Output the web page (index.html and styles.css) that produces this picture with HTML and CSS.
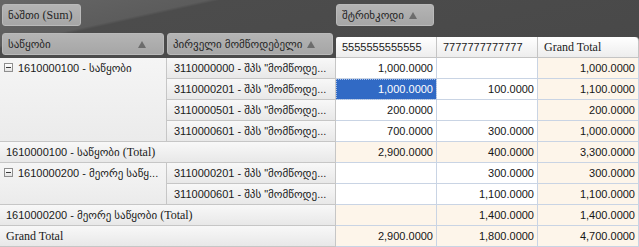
FILE: index.html
```html
<!DOCTYPE html>
<html>
<head>
<meta charset="utf-8">
<link rel="stylesheet" href="styles.css">
</head>
<body>
<div class="pivot">
  <div class="top-bg"></div>
  <div class="field filter-field">ნაშთი&nbsp;<span class="lat">(Sum)</span></div>
  <div class="field col-field"><span>შტრიხკოდი</span><span class="tri"></span></div>
  <div class="field row-field f1"><span>საწყობი</span><span class="tri"></span></div>
  <div class="field row-field f2"><span>პირველი მომწოდებელი</span><span class="tri"></span></div>
  <div class="colhdr c1">5555555555555</div>
  <div class="colhdr c2">7777777777777</div>
  <div class="colhdr c3"><span class="lat">Grand Total</span></div>

  <div class="rh rh-a span4"><i class="exp"></i>1610000100 - საწყობი</div>
  <div class="rh rh-b">3110000000 - შპს "მომწოდე...</div>
  <div class="d">1,000.0000</div><div class="d"></div><div class="d t">1,000.0000</div>

  <div class="rh rh-b">3110000201 - შპს "მომწოდე...</div>
  <div class="d sel">1,000.0000</div><div class="d">100.0000</div><div class="d t">1,100.0000</div>

  <div class="rh rh-b">3110000501 - შპს "მომწოდე...</div>
  <div class="d">200.0000</div><div class="d"></div><div class="d t">200.0000</div>

  <div class="rh rh-b">3110000601 - შპს "მომწოდე...</div>
  <div class="d">700.0000</div><div class="d">300.0000</div><div class="d t">1,000.0000</div>

  <div class="rh tot">1610000100 - საწყობი&nbsp;<span class="lat">(Total)</span></div>
  <div class="d t">2,900.0000</div><div class="d t">400.0000</div><div class="d t">3,300.0000</div>

  <div class="rh rh-a span2"><i class="exp"></i>1610000200 - მეორე საწყ...</div>
  <div class="rh rh-b">3110000201 - შპს "მომწოდე...</div>
  <div class="d"></div><div class="d">300.0000</div><div class="d t">300.0000</div>

  <div class="rh rh-b">3110000601 - შპს "მომწოდე...</div>
  <div class="d"></div><div class="d">1,100.0000</div><div class="d t">1,100.0000</div>

  <div class="rh tot">1610000200 - მეორე საწყობი&nbsp;<span class="lat">(Total)</span></div>
  <div class="d t"></div><div class="d t">1,400.0000</div><div class="d t">1,400.0000</div>

  <div class="rh tot"><span class="lat">Grand Total</span></div>
  <div class="d t">2,900.0000</div><div class="d t">1,800.0000</div><div class="d t">4,700.0000</div>
</div>
</body>
</html>
```

FILE: styles.css
```css
* { box-sizing: border-box; }
html, body { margin: 0; padding: 0; }
body {
  width: 639px;
  height: 247px;
  overflow: hidden;
  background: #fff;
  font-family: "Liberation Sans", "DejaVu Sans", sans-serif;
  font-size: 11px;
  color: #1a1a1a;
}
.lat { font-family: "Liberation Serif", serif; font-size: 12px; }

.pivot {
  display: grid;
  grid-template-columns: 167px 169px 101px 101px 101px;
  grid-template-rows: 29px 29px repeat(9, 21px);
}
.top-bg {
  grid-area: 1 / 1 / 3 / 6;
  background: linear-gradient(167.6deg, #666 0%, #5c5c5c 23%, #4c4c4c 24.5%, #484848 100%);
}
.field {
  display: flex;
  align-items: center;
  height: 22px;
  margin-top: 4px;
  padding: 0 5px;
  border: 1px solid #bababa;
  border-radius: 3px;
  background: linear-gradient(#b4b4b4, #a6a6a6);
  color: #262626;
  white-space: nowrap;
}
.filter-field { grid-row: 1; grid-column: 1; width: 79px; margin-left: 2px; }
.col-field { grid-row: 1; grid-column: 3 / 5; width: 98px; gap: 5px; }
.row-field { grid-row: 2; justify-content: space-between; padding-right: 17px; }
.f1 { grid-column: 1; margin-left: 2px; width: 162px; }
.f2 { grid-column: 2; width: 166px; }
.tri {
  width: 0;
  height: 0;
  border-left: 4px solid transparent;
  border-right: 4px solid transparent;
  border-bottom: 7px solid #6c6c6c;
}
.colhdr {
  grid-row: 2;
  margin-top: 8px;
  height: 21px;
  display: flex;
  align-items: center;
  padding-left: 6px;
  border-right: 1px solid #c4c4c4;
  border-bottom: 1px solid #c4c4c4;
  background: linear-gradient(#ffffff, #ededed);
  white-space: nowrap;
}
.c1 { grid-column: 3; border-top-left-radius: 2px; }
.c2 { grid-column: 4; }
.c3 { grid-column: 5; border-top-right-radius: 4px; }

.rh {
  display: flex;
  align-items: center;
  padding-left: 7px;
  border-right: 1px solid #c6c6c6;
  border-bottom: 1px solid #c6c6c6;
  background: linear-gradient(#f8f8f8, #e8e8e8);
  white-space: nowrap;
  overflow: hidden;
}
.rh-a {
  align-items: flex-start;
  padding: 4px 0 0 4px;
  background: linear-gradient(#f5f5f5, #ebebeb);
}
.span4 { grid-row: span 4; }
.span2 { grid-row: span 2; }
.tot { grid-column: span 2; padding-left: 6px; }
.exp {
  display: flex;
  align-items: center;
  justify-content: center;
  width: 9px;
  height: 9px;
  margin: 1px 5px 0 0;
  border: 1px solid #8e8e8e;
  background: linear-gradient(#ffffff, #e4e4e4);
}
.exp::before {
  content: "";
  width: 5px;
  height: 1px;
  background: #3a3a3a;
}
.d {
  display: flex;
  align-items: center;
  justify-content: flex-end;
  padding-right: 3px;
  border-right: 1px solid #c9d4e4;
  border-bottom: 1px solid #c9d4e4;
  background: #fff;
  color: #161616;
}
.t { background: #fdf5ea; }
.sel {
  background: #316ac5;
  color: #fff;
  outline: 1px dotted #a9c0e6;
  outline-offset: -1px;
}
```
